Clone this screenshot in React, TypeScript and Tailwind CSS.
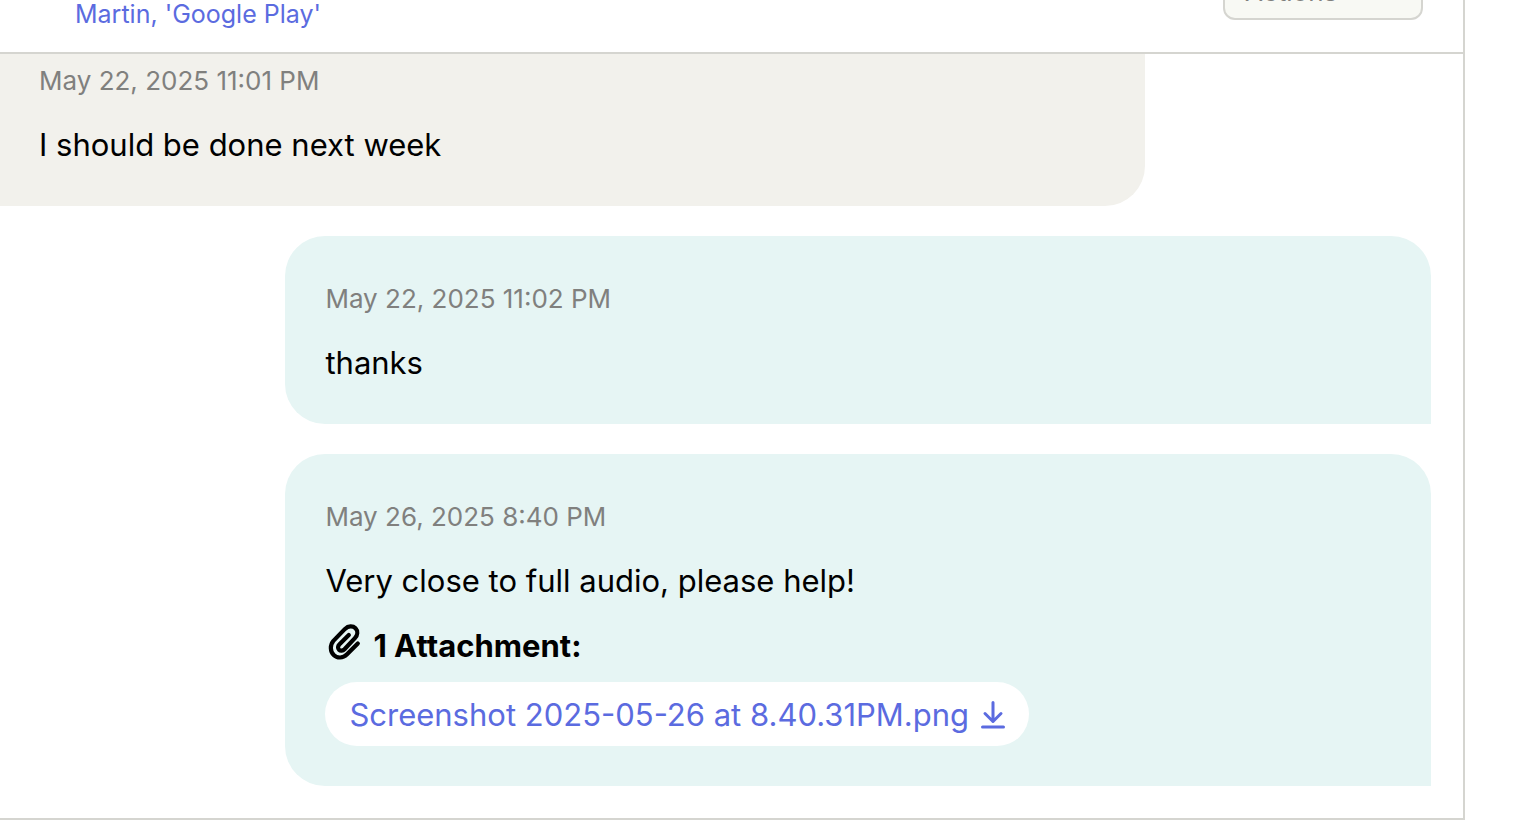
import React from "react";

type Attachment = { name: string };

type Message = {
  id: number;
  date: string;
  text: string;
  sent: boolean;
  attachments?: Attachment[];
};

const messages: Message[] = [
  {
    id: 1,
    date: "May 22, 2025 11:01 PM",
    text: "I should be done next week",
    sent: false,
  },
  { id: 2, date: "May 22, 2025 11:02 PM", text: "thanks", sent: true },
  {
    id: 3,
    date: "May 26, 2025 8:40 PM",
    text: "Very close to full audio, please help!",
    sent: true,
    attachments: [{ name: "Screenshot 2025-05-26 at 8.40.31PM.png" }],
  },
];

const PaperclipIcon = () => (
  <svg
    viewBox="-1 0 36 40"
    className="-mt-1 h-10 w-9 shrink-0 self-start"
    fill="none"
    stroke="currentColor"
    strokeWidth="4.2"
    strokeLinecap="round"
    strokeLinejoin="round"
    aria-hidden="true"
  >
    <path d="M31.800 21.500 20.800 32.600C17 36.300 11.200 36.500 7.700 33C4 29.300 3.900 23 7.400 18.900L19 6.900C22.300 3.700 26.900 3.700 29.500 6.300C32.100 9 31.800 13 28.900 16.200L18.500 27.200C16.800 28.900 14.500 29.200 13 27.700C11.600 26.300 11.800 24 13.300 22.500L22.800 12.900" />
  </svg>
);

const DownloadIcon = () => (
  <svg
    viewBox="0 0 24 28"
    className="h-7 w-6 shrink-0"
    fill="none"
    stroke="currentColor"
    strokeWidth="3"
    strokeLinecap="round"
    strokeLinejoin="round"
    aria-hidden="true"
  >
    <path d="M12 1.500V20.500M4 12.500 12 20.500l8-8M1.500 26h21" />
  </svg>
);

const MessageBubble = ({ message }: { message: Message }) => (
  <li
    className={
      message.sent
        ? "w-4/5 self-end rounded-t-[40px] rounded-bl-[40px] bg-[#e6f5f4] p-10"
        : "w-4/5 self-start rounded-br-[40px] bg-[#f2f1ec] px-10 pt-1 pb-10"
    }
  >
    <p className="mb-5 text-[26px] leading-[46px] text-[#80807e]">
      {message.date}
    </p>
    <p className="text-[31px] leading-[42px]">{message.text}</p>
    {message.attachments && (
      <div className="mt-6">
        <p className="flex items-center gap-3 text-[31px] leading-10 font-bold">
          <PaperclipIcon />
          {message.attachments.length} Attachment:
        </p>
        {message.attachments.map((file) => (
          <a
            key={file.name}
            href="#"
            className="mt-4 inline-flex h-16 items-center gap-3 rounded-full bg-white px-6 pt-0.5 align-top text-[31px] text-[#5b6be0]"
          >
            {file.name}
            <DownloadIcon />
          </a>
        ))}
      </div>
    )}
  </li>
);

const App = () => {
  return (
    <div className="overflow-hidden bg-white font-['Inter',sans-serif] text-black">
      <main className="mr-[63px] border-r-2 border-b-2 border-[#d5d5d0]">
        <header className="flex h-[54px] items-end justify-between overflow-hidden border-b-2 border-[#d5d5d0] pr-10 pl-[75px]">
          <a href="#" className="mb-5 text-[25px] leading-9 text-[#5b6be0]">
            Martin, &apos;Google Play&apos;
          </a>
          <button
            type="button"
            className="mb-8 h-[58px] w-[200px] shrink-0 rounded-xl border-2 border-[#d5d5d0] bg-[#f8f9f4] px-5 text-left text-[26px] text-[#80807e]"
          >
            Actions
          </button>
        </header>
        <ul className="-ml-px flex flex-col gap-[30px] pr-8 pb-8">
          {messages.map((message) => (
            <MessageBubble key={message.id} message={message} />
          ))}
        </ul>
      </main>
    </div>
  );
};

export default App;
